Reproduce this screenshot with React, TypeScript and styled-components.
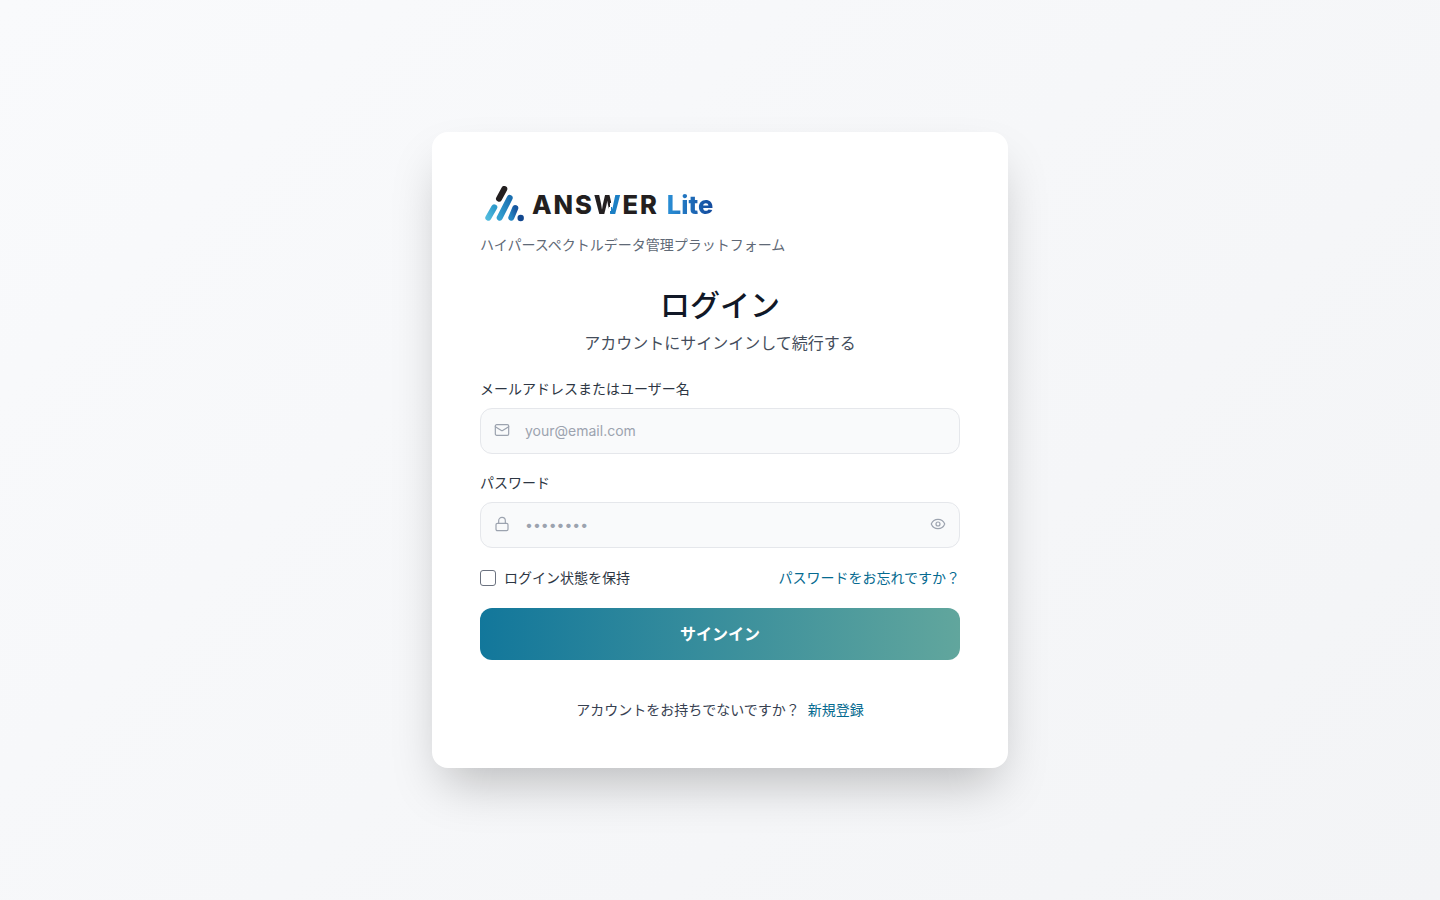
import React, { useState } from 'react';
import styled, { createGlobalStyle } from 'styled-components';
import { Mail, Lock, Eye } from 'lucide-react';

const GlobalStyle = createGlobalStyle`
  * {
    box-sizing: border-box;
  }
  html, body {
    margin: 0;
    padding: 0;
  }
  body {
    font-family: Inter, "Noto Sans CJK JP", sans-serif;
    color: #111827;
  }
`;

const Page = styled.main`
  min-height: 100vh;
  display: flex;
  align-items: center;
  justify-content: center;
  background: linear-gradient(135deg, #f9fafc 0%, #f3f4f6 100%);
`;

const Card = styled.section`
  width: 576px;
  height: 636px;
  padding: 48px;
  background: #ffffff;
  border-radius: 16px;
  box-shadow: 0 25px 50px -12px rgba(0, 0, 0, 0.25);
`;

const Brand = styled.header`
  display: flex;
  flex-direction: column;
  align-items: flex-start;
  margin-bottom: 32px;
`;

const LogoRow = styled.div`
  display: flex;
  align-items: center;
  height: 48px;
  padding-left: 5px;
  gap: 7px;
`;

const LogoName = styled.span`
  font-family: Inter, sans-serif;
  font-weight: 800;
  font-size: 25.5px;
  line-height: 1;
  letter-spacing: 1.9px;
  margin-top: 2px;
  color: #231f20;
  display: flex;
  align-items: baseline;
`;

const LogoW = styled.span`
  display: inline-block;
  background: linear-gradient(106deg, #231f20 54%, #ffffff 54%, #ffffff 60%, #1c7fc4 60%);
  -webkit-background-clip: text;
  background-clip: text;
  color: transparent;
`;

const LogoLite = styled.span`
  margin-left: 8px;
  font-weight: 800;
  letter-spacing: 0;
  background: linear-gradient(90deg, #2a8fd6, #134a9c);
  -webkit-background-clip: text;
  background-clip: text;
  color: transparent;
`;

const Tagline = styled.p`
  margin: 7px 0 0;
  font-size: 14px;
  line-height: 20px;
  color: #606976;
`;

const Heading = styled.div`
  text-align: center;
  margin-bottom: 25px;
`;

const Title = styled.h1`
  margin: 0 0 8px;
  font-size: 30px;
  line-height: 36px;
  font-weight: 500;
  color: #111827;
`;

const Subtitle = styled.p`
  margin: 0;
  font-size: 16px;
  line-height: 24px;
  color: #444d5b;
`;

const Form = styled.form`
  display: flex;
  flex-direction: column;
`;

const Field = styled.div`
  display: flex;
  flex-direction: column;
  margin-bottom: 20px;
`;

const Label = styled.label`
  font-size: 14px;
  line-height: 18px;
  color: #2d3643;
  margin-bottom: 10px;
`;

const InputBox = styled.div`
  height: 46px;
  display: flex;
  align-items: center;
  padding: 0 13px;
  gap: 15px;
  background: #f9fafb;
  border: 1px solid #e5e7eb;
  border-radius: 12px;
  color: #9ca3af;
  svg {
    flex: none;
    margin-top: -2px;
  }
`;

const Input = styled.input`
  flex: 1;
  min-width: 0;
  border: none;
  outline: none;
  background: transparent;
  font-family: Inter, sans-serif;
  font-size: 14px;
  color: #9ca3af;
  padding: 0 0 2px;
  &::placeholder {
    color: #9ca3af;
    opacity: 1;
  }
`;

const Options = styled.div`
  display: flex;
  align-items: center;
  justify-content: space-between;
  margin: 0 0 20px;
`;

const Remember = styled.label`
  display: flex;
  align-items: center;
  gap: 8px;
  font-size: 14px;
  line-height: 20px;
  color: #2d3643;
`;

const Check = styled.input`
  appearance: none;
  width: 16px;
  height: 16px;
  margin: 0;
  background: #fff;
  border: 1px solid #6b7280;
  border-radius: 3px;
`;

const TextLink = styled.a`
  font-size: 14px;
  line-height: 20px;
  color: #056a90;
  text-decoration: none;
`;

const Submit = styled.button`
  height: 52px;
  border: none;
  border-radius: 12px;
  padding: 0 0 2px;
  background: linear-gradient(90deg, #12779b 0%, #61a69d 100%);
  color: #ffffff;
  font-family: inherit;
  font-size: 16px;
  font-weight: 700;
  cursor: pointer;
`;

const Footer = styled.p`
  margin: 40px 0 0;
  display: flex;
  justify-content: center;
  gap: 8px;
  font-size: 14px;
  line-height: 20px;
  color: #374151;
`;

const LogoMark = () => (
  <svg width="40" height="36" viewBox="0 0 40 36" aria-hidden="true">
    <defs>
      <linearGradient id="barA" x1="0" y1="1" x2="1" y2="0">
        <stop offset="0" stopColor="#4fb9dc" />
        <stop offset="1" stopColor="#2f9bcb" />
      </linearGradient>
      <linearGradient id="barB" x1="0" y1="1" x2="1" y2="0">
        <stop offset="0" stopColor="#33a0d0" />
        <stop offset="1" stopColor="#1a6fb0" />
      </linearGradient>
      <linearGradient id="barC" x1="0" y1="1" x2="1" y2="0">
        <stop offset="0" stopColor="#2385c2" />
        <stop offset="1" stopColor="#17569f" />
      </linearGradient>
    </defs>
    <g fill="none" strokeLinecap="round" strokeWidth="6">
      <line x1="3.3" y1="31.7" x2="9.3" y2="21.3" stroke="url(#barA)" />
      <line x1="14.7" y1="31.7" x2="24.7" y2="12" stroke="url(#barB)" />
      <line x1="26.3" y1="31.7" x2="30.3" y2="22" stroke="url(#barC)" />
      <line x1="14" y1="12.7" x2="19.3" y2="3" stroke="#231f20" />
    </g>
    <circle cx="35.7" cy="32" r="3.2" fill="#12478f" />
  </svg>
);

export default function App() {
  const [remember, setRemember] = useState(false);

  return (
    <Page>
      <GlobalStyle />
      <Card>
        <Brand>
          <LogoRow>
            <LogoMark />
            <LogoName>
              ANS<LogoW>W</LogoW>ER<LogoLite>Lite</LogoLite>
            </LogoName>
          </LogoRow>
          <Tagline>ハイパースペクトルデータ管理プラットフォーム</Tagline>
        </Brand>
        <Heading>
          <Title>ログイン</Title>
          <Subtitle>アカウントにサインインして続行する</Subtitle>
        </Heading>
        <Form onSubmit={(e) => e.preventDefault()}>
          <Field>
            <Label htmlFor="email">メールアドレスまたはユーザー名</Label>
            <InputBox>
              <Mail size={16} strokeWidth={1.8} />
              <Input id="email" type="text" placeholder="your@email.com" />
            </InputBox>
          </Field>
          <Field>
            <Label htmlFor="password">パスワード</Label>
            <InputBox>
              <Lock size={16} strokeWidth={1.8} />
              <Input id="password" type="password" defaultValue="password" />
              <Eye size={16} strokeWidth={1.8} />
            </InputBox>
          </Field>
          <Options>
            <Remember>
              <Check type="checkbox" checked={remember} onChange={(e) => setRemember(e.target.checked)} />
              ログイン状態を保持
            </Remember>
            <TextLink href="#">パスワードをお忘れですか？</TextLink>
          </Options>
          <Submit type="submit">サインイン</Submit>
        </Form>
        <Footer>
          アカウントをお持ちでないですか？
          <TextLink href="#">新規登録</TextLink>
        </Footer>
      </Card>
    </Page>
  );
}
